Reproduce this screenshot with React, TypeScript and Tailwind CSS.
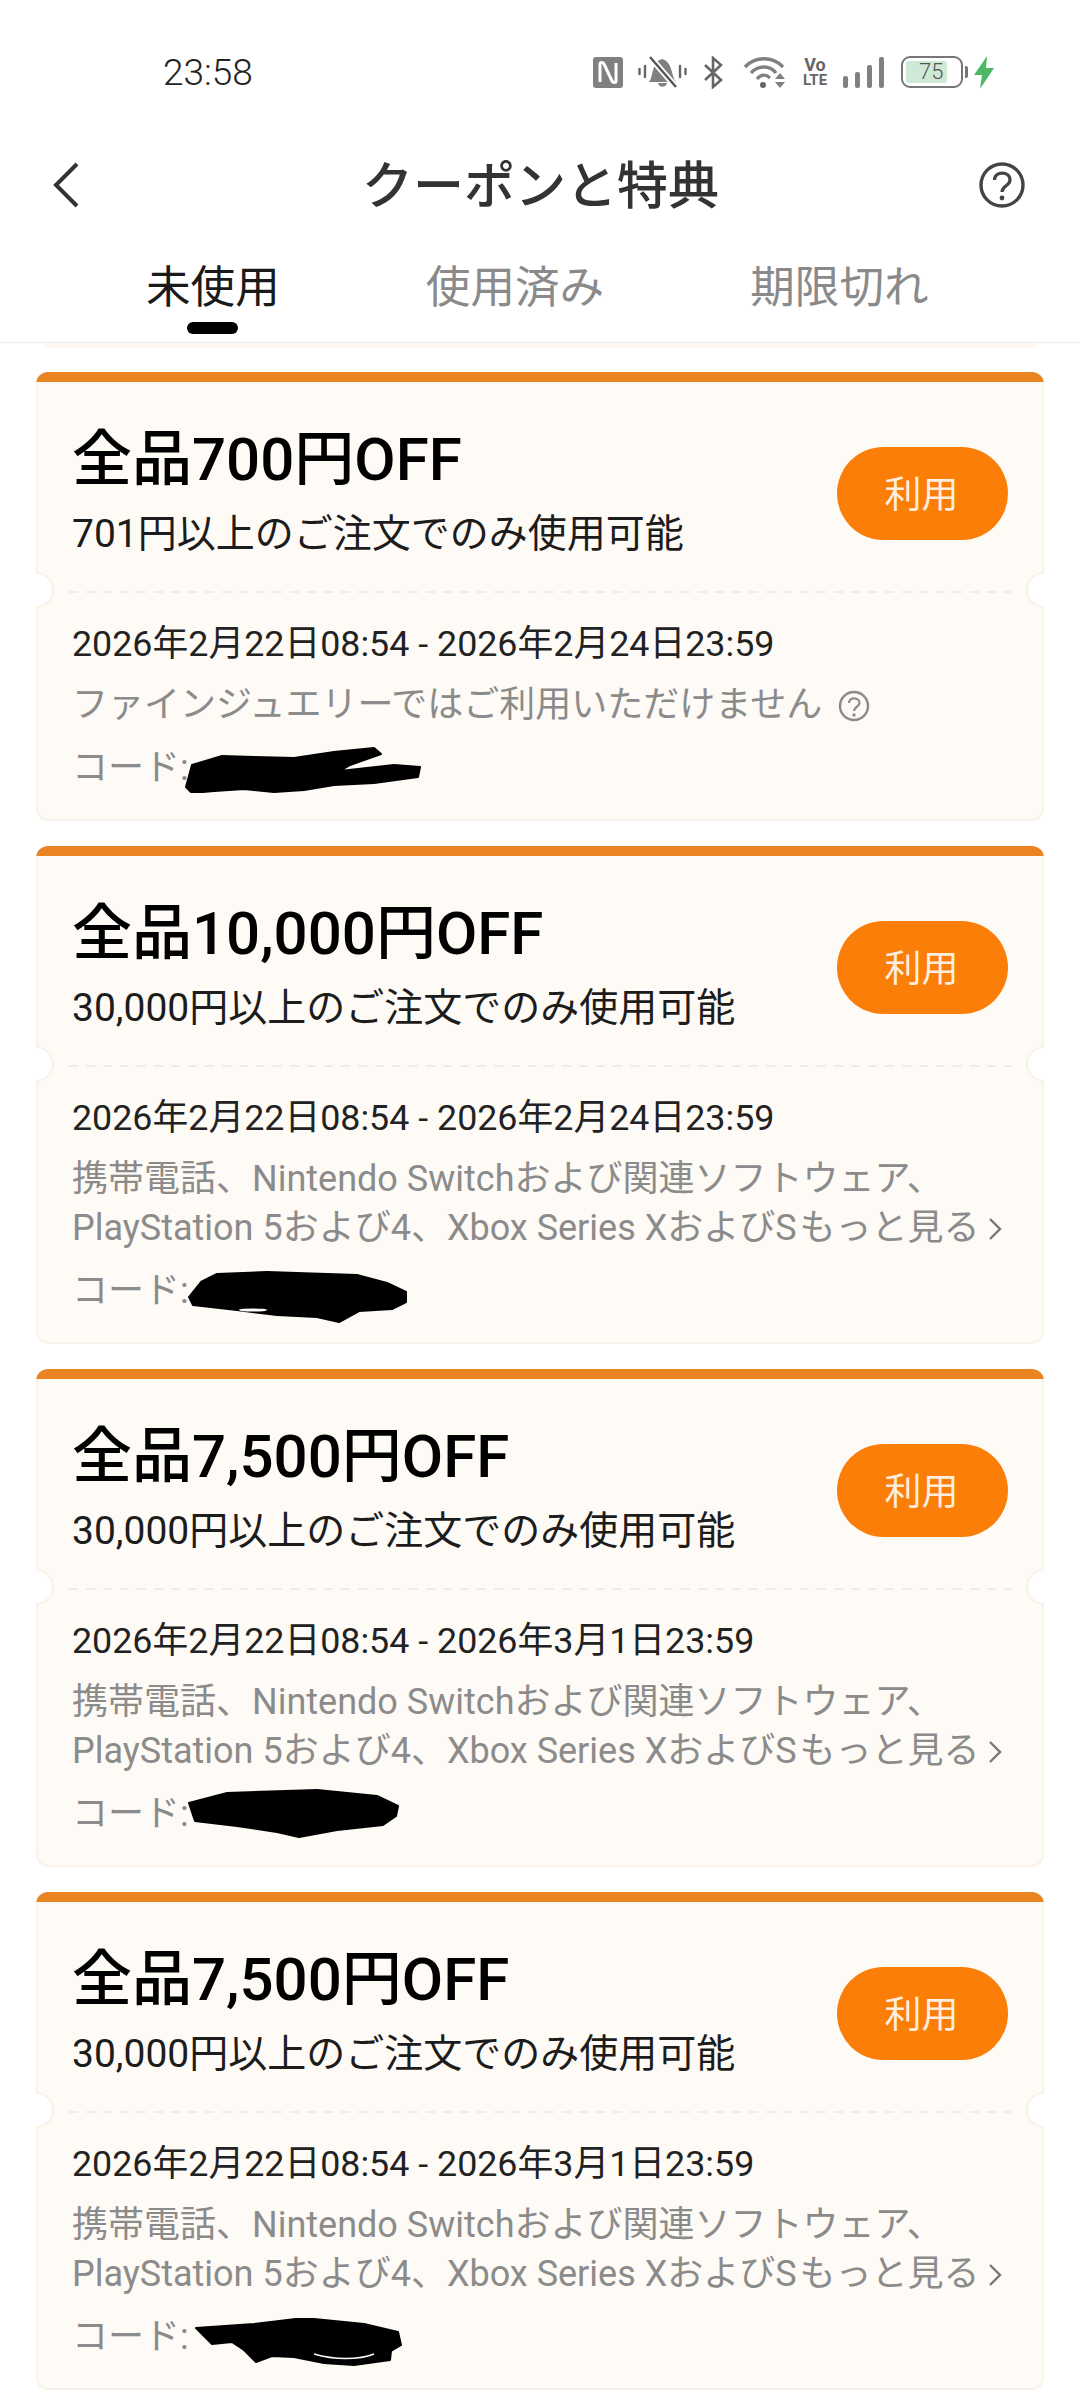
import React from "react";

const FONT = "font-['Roboto','Noto_Sans_CJK_JP',sans-serif]";

const SCRIBBLES = [
  {
    w: 238,
    h: 46,
    cls: "-ml-[5px] translate-y-[2px]",
    d: "M2 40 L8 18 L38 9 L70 10 L110 11 L150 5 L190 1 L197 7 L166 18 L156 24 L210 18 L236 20 L234 30 L190 36 L150 38 L120 43 L90 45 L60 42 L30 44 L8 46 Z",
  },
  {
    w: 220,
    h: 54,
    cls: "-ml-[2px] translate-y-[6px]",
    d: "M2 27 L14 12 L30 4 L80 2 L170 5 L200 13 L219 22 L219 32 L205 39 L172 41 L152 52 L130 47 L90 45 L50 40 L6 35 Z",
  },
  {
    w: 212,
    h: 50,
    cls: "-ml-[2px] -translate-y-[1px]",
    d: "M2 15 L40 5 L130 2 L190 8 L211 18 L209 28 L196 37 L150 42 L112 49 L90 44 L50 38 L8 33 Z",
  },
  {
    w: 208,
    h: 48,
    cls: "ml-[5px] translate-y-[5px]",
    d: "M2 10 L60 6 L110 0 L170 6 L204 14 L207 27 L197 33 L196 42 L160 47 L130 45 L100 39 L78 38 L62 44 L50 32 L38 24 L18 26 Z",
  },
];

function Scribble({ kind }: { kind: number }) {
  const s = SCRIBBLES[kind];
  return (
    <svg width={s.w} height={s.h} viewBox={`0 0 ${s.w} ${s.h}`} className={`-my-[10px] shrink-0 ${s.cls}`}>
      <path d={s.d} fill="#000000" stroke="#000000" strokeWidth="2" strokeLinejoin="round" />
      {kind === 1 && <ellipse cx="66" cy="40" rx="14" ry="1.6" fill="#fefaf5" />}
      {kind === 3 && <path d="M120 36 C140 42 165 42 180 36" fill="none" stroke="#fefaf5" strokeWidth="1.5" />}
    </svg>
  );
}

function Coupon({
  title,
  sub,
  date,
  kind,
  lines,
}: {
  title: string;
  sub: string;
  date: string;
  kind: number;
  lines: React.ReactNode;
}) {
  return (
    <div className="relative mx-[36px] overflow-hidden rounded-[12px]">
      <div className="h-[10px] bg-[#ea8321]" />
      <div className="rounded-b-[12px] border-x-2 border-b-2 border-[#f9f2e8] bg-[#fefaf5]">
        <div className="flex h-[209px] items-start justify-between pl-[34px] pr-[34px] pt-[40px]">
          <div>
            <div className="text-[60px] font-medium leading-[76px] text-black">{title}</div>
            <div className="mt-[8px] text-[39px] leading-[56px] text-[#1c1c1c]">{sub}</div>
          </div>
          <div className="mt-[25px] flex h-[93px] w-[171px] items-center justify-center rounded-[47px] bg-[#fb7e09] pr-[2px] pt-[5px] text-[37px] text-[#ffeedd]">
            利用
          </div>
        </div>
        <div className="mx-[31px] h-[2px] bg-[repeating-linear-gradient(90deg,#efebe6_0_9px,transparent_9px_17px)]" />
        <div className="px-[34px] pb-[27px] pt-[26px]">
          <div className="text-[35.8px] leading-[50px] text-[#222222]">{date}</div>
          <div className="mt-[12px] text-[36px] leading-[49px] text-[#8b8b8b]">{lines}</div>
          <div className="mt-[13px] flex h-[49px] items-center text-[36px] text-[#8b8b8b]">
            <span>コード:</span>
            <Scribble kind={kind} />
          </div>
        </div>
      </div>
      <div className="absolute left-[-18px] top-[200px] h-[36px] w-[36px] rounded-full border-2 border-[#f9f2e8] bg-white" />
      <div className="absolute right-[-18px] top-[200px] h-[36px] w-[36px] rounded-full border-2 border-[#f9f2e8] bg-white" />
    </div>
  );
}

function More() {
  return (
    <div className="flex items-center whitespace-nowrap">
      <span>PlayStation 5および4、Xbox Series XおよびS</span>
      <span className="ml-[3px]">もっと見る</span>
      <svg width="14" height="24" viewBox="0 0 14 24" className="ml-[8px]">
        <path d="M2 2 L12 12 L2 22" fill="none" stroke="#777777" strokeWidth="2.4" />
      </svg>
    </div>
  );
}

function LongLines() {
  return (
    <>
      <div>携帯電話、Nintendo Switchおよび関連ソフトウェア、</div>
      <More />
    </>
  );
}

function StatusIcons() {
  return (
    <div className="ml-[335px] flex items-center text-[#666666]">
      <svg width="30" height="31" viewBox="0 0 30 31">
        <rect x="0" y="0" width="30" height="31" rx="3" fill="#808080" />
        <path d="M7 25 V7 C7 5 10 5 11 7 L19 24 C20 26 23 26 23 24 V6" fill="none" stroke="#ffffff" strokeWidth="3" />
      </svg>
      <svg width="49" height="33" viewBox="0 0 49 33" className="ml-[15px]">
        <path d="M11 26 C16 20 13 6 24 3 C35 6 33 20 38 26 Z" fill="#808080" />
        <path d="M20 27 C21 32 28 32 29 27 Z" fill="#808080" />
        <path d="M12 1 L38 31" stroke="#ffffff" strokeWidth="6" />
        <path d="M12 1 L38 31" stroke="#555555" strokeWidth="2.4" />
        <path d="M1.5 13 V18 M7 10 V21 M42 10 V21 M47.5 13 V18" stroke="#666666" strokeWidth="2.4" strokeLinecap="round" />
      </svg>
      <svg width="21" height="33" viewBox="0 0 21 33" className="ml-[16px]">
        <path d="M2 9 L18 24 L10 31 V2 L18 9 L2 24" fill="none" stroke="#666666" strokeWidth="2.6" />
      </svg>
      <svg width="44" height="33" viewBox="0 0 44 33" className="ml-[19px]">
        <path d="M2 11 C12 0 30 0 40 11" fill="none" stroke="#808080" strokeWidth="3.4" />
        <path d="M8 17 C15 9 27 9 33 17" fill="none" stroke="#808080" strokeWidth="3.4" />
        <path d="M14 23 C18 18 23 18 27 22" fill="none" stroke="#808080" strokeWidth="3.2" />
        <circle cx="20" cy="29" r="3" fill="#666666" />
        <path d="M32 23 L37 17 L42 23 Z M32 26 L42 26 L37 32 Z" fill="#808080" />
      </svg>
      <div className="ml-[16px] flex w-[24px] flex-col items-center text-[18px] font-bold leading-[16px] text-[#666666]">
        <span>Vo</span>
        <span className="text-[15px] leading-[15px]">LTE</span>
      </div>
      <div className="ml-[16px] flex h-[31px] items-end gap-[7px]">
        <div className="h-[12px] w-[5px] rounded-[2px] bg-[#808080]" />
        <div className="h-[16px] w-[5px] rounded-[2px] bg-[#808080]" />
        <div className="h-[23px] w-[5px] rounded-[2px] bg-[#808080]" />
        <div className="h-[31px] w-[5px] rounded-[2px] bg-[#808080]" />
      </div>
      <div className="ml-[17px] flex items-center">
        <div className="relative flex h-[32px] w-[62px] items-center rounded-[9px] border-2 border-[#777777] p-[3px]">
          <div className="h-full w-[41px] rounded-[2px] bg-[#cfe9d6]" />
          <span className="absolute left-[16px] top-0 text-[22px] font-light leading-[28px] text-[#555555]">75</span>
        </div>
        <div className="ml-[2px] h-[12px] w-[3px] rounded-r-[2px] bg-[#777777]" />
      </div>
      <svg width="21" height="33" viewBox="0 0 21 33" className="ml-[6px]">
        <path d="M13 0 L0 19 H8 L6 33 L20 12 H12 Z" fill="#4cb866" />
      </svg>
    </div>
  );
}

export default function App() {
  const date1 = "2026年2月22日08:54 - 2026年2月24日23:59";
  const date2 = "2026年2月22日08:54 - 2026年3月1日23:59";
  const sub = "30,000円以上のご注文でのみ使用可能";
  return (
    <div className={`${FONT} h-[2400px] w-[1080px] overflow-hidden bg-white`}>
      <div className="border-b border-[#ececec]">
        <div className="flex h-[144px] items-center pl-[163px]">
          <span className="w-[95px] text-[37px] font-light leading-none text-[#222222]">23:58</span>
          <StatusIcons />
        </div>
        <div className="flex h-[82px] items-center justify-between pl-[52px] pr-[55px]">
          <svg width="28" height="46" viewBox="0 0 28 46">
            <path d="M25 2 L4 23 L25 44" fill="none" stroke="#333333" strokeWidth="4" />
          </svg>
          <div className="ml-[22px] pt-[5px] text-[51px] font-medium text-[#333333]">クーポンと特典</div>
          <svg width="46" height="46" viewBox="0 0 46 46">
            <circle cx="23" cy="23" r="21" fill="none" stroke="#444444" strokeWidth="3.4" />
            <path d="M15.5 18 C15.5 8.5 31 9 31 18 C31 24 23 23.5 23 30" fill="none" stroke="#444444" strokeWidth="3.2" />
            <circle cx="23" cy="36" r="2.4" fill="#444444" />
          </svg>
        </div>
        <div className="flex gap-[146px] pl-[146px] pt-[32px] text-[44.6px] leading-[60px]">
          <div className="flex flex-col items-center text-[#1a1a1a]">
            <span>未使用</span>
            <div className="mt-[4px] h-[12px] w-[51px] rounded-full bg-black" />
            <div className="h-[8px]" />
          </div>
          <span className="text-[#8a8a8a]">使用済み</span>
          <span className="text-[#8a8a8a]">期限切れ</span>
        </div>
      </div>
      <div className="mx-[42px] h-[5px] rounded-b-[6px] bg-[#fdf8f1]" />
      <div className="mt-[24px] flex flex-col gap-[25px]">
        <Coupon
          title="全品700円OFF"
          sub="701円以上のご注文でのみ使用可能"
          date={date1}
          kind={0}
          lines={
            <div className="flex items-center">
              <span>ファインジュエリーではご利用いただけません</span>
              <svg width="32" height="32" viewBox="0 0 32 32" className="ml-[16px]">
                <circle cx="16" cy="16" r="14" fill="none" stroke="#8b8b8b" strokeWidth="2.4" />
                <path d="M11 13 C11 6.5 21.5 7 21.5 13 C21.5 17 16 16.5 16 21" fill="none" stroke="#8b8b8b" strokeWidth="2.2" />
                <circle cx="16" cy="25" r="1.7" fill="#8b8b8b" />
              </svg>
            </div>
          }
        />
        <Coupon title="全品10,000円OFF" sub={sub} date={date1} kind={1} lines={<LongLines />} />
        <Coupon title="全品7,500円OFF" sub={sub} date={date2} kind={2} lines={<LongLines />} />
        <Coupon title="全品7,500円OFF" sub={sub} date={date2} kind={3} lines={<LongLines />} />
      </div>
    </div>
  );
}
